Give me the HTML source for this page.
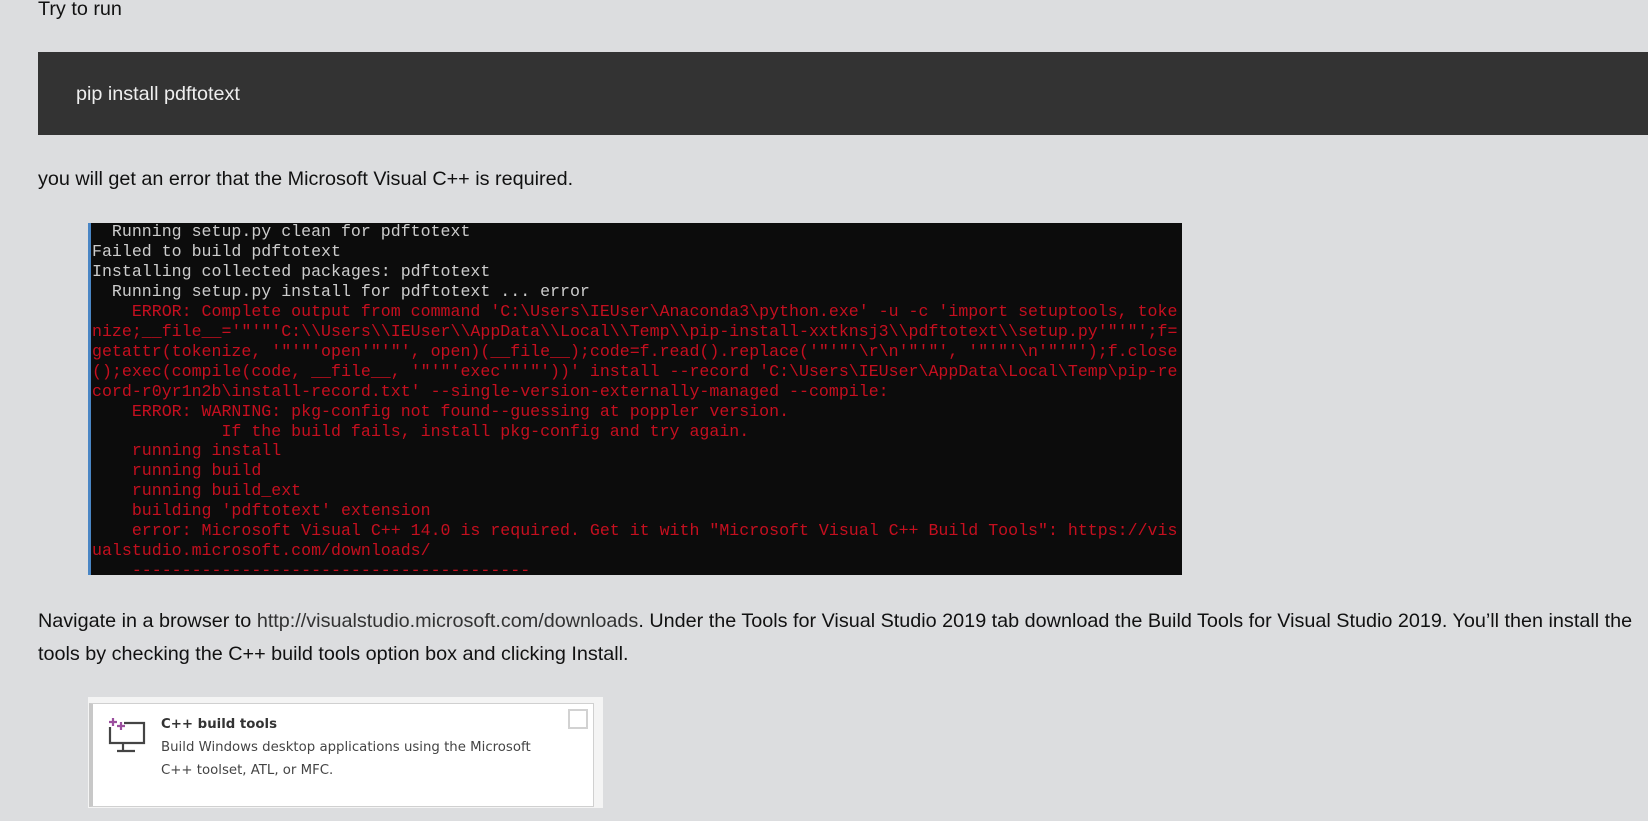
<!DOCTYPE html>
<html><head><meta charset="utf-8"><style>
html,body{margin:0;padding:0;}
body{width:1648px;height:821px;overflow:hidden;background:#dcdddf;font-family:"Liberation Sans",Arial,sans-serif;color:#111;position:relative;}
.t{position:absolute;left:38px;font-size:19.8px;line-height:22px;white-space:nowrap;}
.code{position:absolute;left:38px;top:52px;width:1610px;height:83px;background:#333;color:#eee;font-size:19.8px;}
.code span{position:absolute;left:38px;top:31px;line-height:22px;}
.term{position:absolute;left:88px;top:223px;width:1094px;height:352px;background:#0c0c0c;overflow:hidden;border-left:3px solid #4a86c5;box-sizing:border-box;}
.term pre{margin:0;position:absolute;left:1px;top:-1px;font-family:"Liberation Mono",monospace;font-size:16.6px;line-height:19.95px;color:#c50f1f;white-space:pre;}
.w{color:#cccccc;}
a{color:#333;text-decoration:none;}
.card{position:absolute;left:88px;top:697px;width:515px;height:111px;background:#f4f4f4;}
.inner{position:absolute;left:1px;top:6px;width:505px;height:104px;background:#fff;border:1px solid #d0d0d0;border-left:4px solid #c8c8c8;box-sizing:border-box;}
.cb{position:absolute;left:568px;top:709px;width:20px;height:20px;border:2px solid #d2d2d2;box-sizing:border-box;background:#fff;}
.c{position:absolute;left:161px;font-family:"DejaVu Sans","Liberation Sans",sans-serif;font-size:13.3px;color:#444;white-space:nowrap;}
</style></head><body>
<div class="t" style="top:-2px">Try to run</div>
<div class="code"><span>pip install pdftotext</span></div>
<div class="t" style="top:168px">you will get an error that the Microsoft Visual C++ is required.</div>
<div class="term"><pre><span class="w">  Running setup.py clean for pdftotext
Failed to build pdftotext
Installing collected packages: pdftotext
  Running setup.py install for pdftotext ... error</span>
    ERROR: Complete output from command 'C:\Users\IEUser\Anaconda3\python.exe' -u -c 'import setuptools, toke
nize;__file__='"'"'C:\\Users\\IEUser\\AppData\\Local\\Temp\\pip-install-xxtknsj3\\pdftotext\\setup.py'"'"';f=
getattr(tokenize, '"'"'open'"'"', open)(__file__);code=f.read().replace('"'"'\r\n'"'"', '"'"'\n'"'"');f.close
();exec(compile(code, __file__, '"'"'exec'"'"'))' install --record 'C:\Users\IEUser\AppData\Local\Temp\pip-re
cord-r0yr1n2b\install-record.txt' --single-version-externally-managed --compile:
    ERROR: WARNING: pkg-config not found--guessing at poppler version.
             If the build fails, install pkg-config and try again.
    running install
    running build
    running build_ext
    building 'pdftotext' extension
    error: Microsoft Visual C++ 14.0 is required. Get it with "Microsoft Visual C++ Build Tools": https://vis
ualstudio.microsoft.com/downloads/
    ----------------------------------------</pre></div>
<div class="t" style="top:610px">Navigate in a browser to <a>http://visualstudio.microsoft.com/downloads</a>. Under the Tools for Visual Studio 2019 tab download the Build Tools for Visual Studio 2019. You’ll then install the</div>
<div class="t" style="top:643px">tools by checking the C++ build tools option box and clicking Install.</div>
<div class="card"><div class="inner"></div></div>
<div class="cb"></div>
<svg style="position:absolute;left:104px;top:716px" width="46" height="42" viewBox="0 0 46 42">
<path d="M6 11 V27 H40 V7 H20" fill="none" stroke="#444" stroke-width="2.2"/>
<path d="M19 27 V34 M13 35 H31" fill="none" stroke="#444" stroke-width="2.2"/>
<path d="M9 2 V10 M5 6 H13 M17 6 V14 M13 10 H21" fill="none" stroke="#9b4f9e" stroke-width="2.2"/>
</svg>
<div class="c" style="top:717px;font-weight:bold;color:#333">C++ build tools</div>
<div class="c" style="top:740px">Build Windows desktop applications using the Microsoft</div>
<div class="c" style="top:763px">C++ toolset, ATL, or MFC.</div>
</body></html>
